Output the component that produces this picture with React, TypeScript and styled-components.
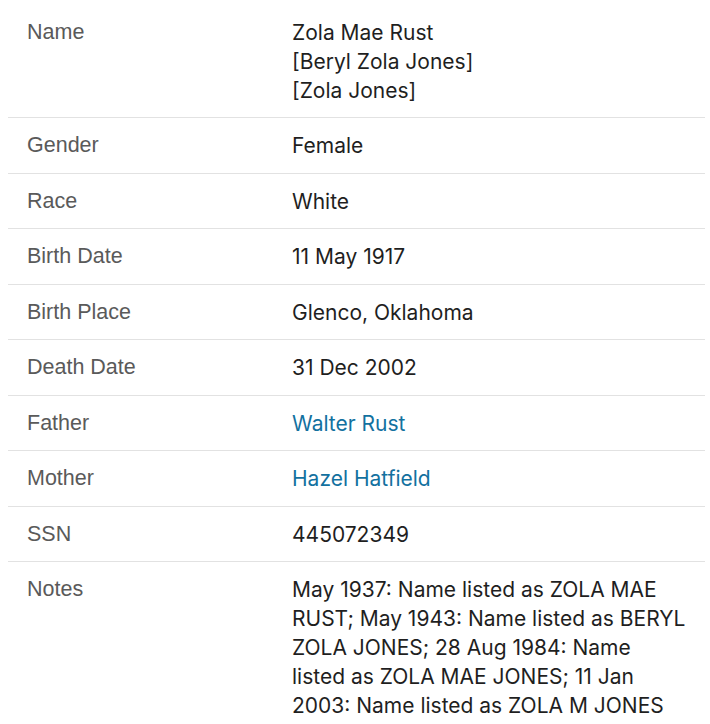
import React from "react";
import styled, { createGlobalStyle } from "styled-components";

const GlobalStyle = createGlobalStyle`
  body {
    margin: 0;
    background: #ffffff;
  }
`;

const Table = styled.div`
  width: 697px;
  margin-left: 8px;
  padding-top: 4.5px;
`;

const Row = styled.div`
  display: grid;
  grid-template-columns: 284px 1fr;
  padding: 13px 0 12.5px;
  border-bottom: 1px solid #e2e2e2;

  &:last-child {
    border-bottom: none;
  }
`;

const Label = styled.div`
  padding-left: 19px;
  font-family: "Liberation Sans", Arial, sans-serif;
  font-size: 21.5px;
  line-height: 28px;
  color: #5a5a5a;
`;

const Value = styled.div`
  padding-right: 19px;
  font-family: Inter, "Noto Sans", sans-serif;
  font-size: 21px;
  line-height: 29px;
  color: #1f1f1f;
`;

const Line = styled.div``;

const Link = styled.a`
  color: #13719f;
  text-decoration: none;
`;

type Fact = {
  label: string;
  lines: string[];
  link?: boolean;
};

const FACTS: Fact[] = [
  { label: "Name", lines: ["Zola Mae Rust", "[Beryl Zola Jones]", "[Zola Jones]"] },
  { label: "Gender", lines: ["Female"] },
  { label: "Race", lines: ["White"] },
  { label: "Birth Date", lines: ["11 May 1917"] },
  { label: "Birth Place", lines: ["Glenco, Oklahoma"] },
  { label: "Death Date", lines: ["31 Dec 2002"] },
  { label: "Father", lines: ["Walter Rust"], link: true },
  { label: "Mother", lines: ["Hazel Hatfield"], link: true },
  { label: "SSN", lines: ["445072349"] },
  {
    label: "Notes",
    lines: [
      "May 1937: Name listed as ZOLA MAE RUST; May 1943: Name listed as BERYL ZOLA JONES; 28 Aug 1984: Name listed as ZOLA MAE JONES; 11 Jan 2003: Name listed as ZOLA M JONES",
    ],
  },
];

const App: React.FC = () => {
  return (
    <>
      <GlobalStyle />
      <Table>
        {FACTS.map((fact) => (
          <Row key={fact.label}>
            <Label>{fact.label}</Label>
            <Value>
              {fact.lines.map((line) => (
                <Line key={line}>
                  {fact.link ? <Link href="#">{line}</Link> : line}
                </Line>
              ))}
            </Value>
          </Row>
        ))}
      </Table>
    </>
  );
};

export default App;
